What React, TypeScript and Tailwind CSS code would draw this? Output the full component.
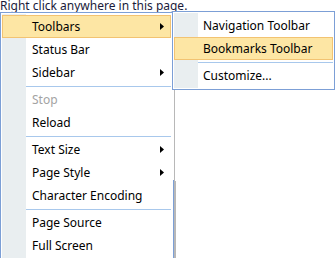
import React from "react";

const Arrow = () => (
  <svg width="4" height="7" viewBox="0 0 4 7" className="block">
    <polygon points="0,0 4,3.5 0,7" fill="#000" />
  </svg>
);

type Item = { label: string; sub?: boolean; disabled?: boolean; hl?: boolean } | "sep";

const mainItems: Item[] = [
  { label: "Toolbars", sub: true, hl: true },
  { label: "Status Bar" },
  { label: "Sidebar", sub: true },
  "sep",
  { label: "Stop", disabled: true },
  { label: "Reload" },
  "sep",
  { label: "Text Size", sub: true },
  { label: "Page Style", sub: true },
  { label: "Character Encoding" },
  "sep",
  { label: "Page Source" },
  { label: "Full Screen" },
];

const subItems: Item[] = [
  { label: "Navigation Toolbar" },
  { label: "Bookmarks Toolbar", hl: true },
  "sep",
  { label: "Customize..." },
];

function Rows({ items, textPad }: { items: Item[]; textPad: string }) {
  return (
    <>
      {items.map((it, i) =>
        it === "sep" ? (
          <div key={i} className="h-[4px] flex items-center pl-[24px]">
            <div className="h-px w-full bg-[#a8c8ec]" />
          </div>
        ) : (
          <div
            key={i}
            className={
              "h-[23px] flex items-center justify-between pr-[6px] " +
              textPad +
              " " +
              (it.hl ? "bg-[#fde6a4] border border-[#f2c372] " : "border border-transparent ") +
              (it.disabled ? "text-[#a3a3a3]" : "text-black")
            }
          >
            <span className="whitespace-nowrap pt-px">{it.label}</span>
            {it.sub ? <Arrow /> : null}
          </div>
        )
      )}
    </>
  );
}

export default function App() {
  return (
    <div
      className="relative w-[335px] h-[258px] bg-white overflow-hidden text-[12px]"
      style={{ fontFamily: '"Noto Sans", "DejaVu Sans", sans-serif' }}
    >
      <div className="h-[12px] leading-[12px] text-[#1a1a3a] whitespace-nowrap">
        Right click anywhere in this page.
      </div>
      <div className="relative w-[176px] pr-[2px] pb-[2px]">
        <div className="relative w-[174px] border-l border-t border-b border-[#7c9fd6] bg-white pl-px pr-[3px] py-px shadow-[1px_1px_0_#b8b8b8]">
          <div className="bg-[linear-gradient(90deg,#e9eef0_24px,#ffffff_24px)] py-px">
            <Rows items={mainItems} textPad="pl-[29px]" />
          </div>
          <div className="absolute right-0 top-[167px] bottom-0 w-px bg-[#7c9fd6]" />
          <div className="absolute -right-[2px] top-[168px] -bottom-px w-px bg-[#b8b8b8]" />
        </div>
      </div>
      <div className="absolute left-[172px] top-[11px] w-[163px] border border-[#7c9fd6] bg-white pl-px pr-px py-px">
        <div className="bg-[linear-gradient(90deg,#e9eef0_24px,#ffffff_24px)] py-px">
          <Rows items={subItems} textPad="pl-[28px]" />
        </div>
      </div>
    </div>
  );
}
